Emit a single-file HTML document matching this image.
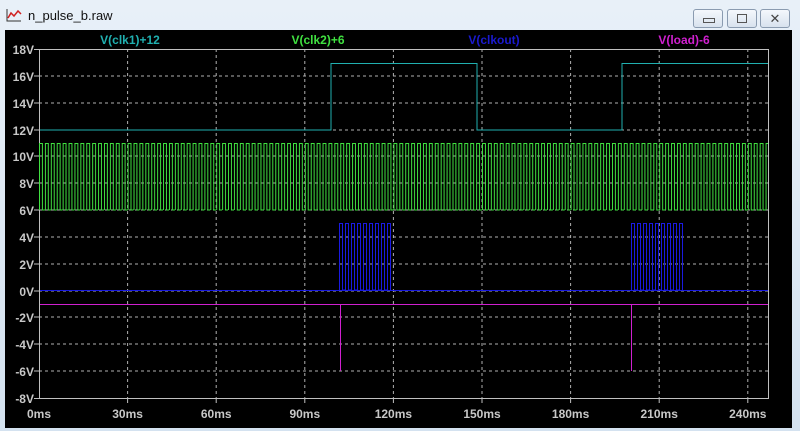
<!DOCTYPE html>
<html><head><style>
html,body{margin:0;padding:0;width:800px;height:431px;overflow:hidden;background:#dce8f4;font-family:"Liberation Sans",sans-serif}
.win{position:absolute;left:0;top:0;width:800px;height:431px;background:linear-gradient(#e8f0f8,#d4e2f0)}
.title{position:absolute;left:28px;top:8px;font-size:13px;color:#111}
.btn{position:absolute;top:9px;width:28px;height:17px;border:1px solid #8a9bb0;border-radius:3px;background:linear-gradient(#f4f8fc,#d8e2ee)}
.plot{position:absolute;left:5px;top:30px;width:787px;height:398px;background:#000}
</style></head><body><div class="win">
<svg style="position:absolute;left:6px;top:8px" width="16" height="14"><path d="M1 1V13H15" stroke="#333" fill="none"/><path d="M2 10L5 5L8 8L12 3L15 6" stroke="#d02020" stroke-width="1.5" fill="none"/></svg>
<div class="title">n_pulse_b.raw</div>
<div class="btn" style="left:693px"><div style="position:absolute;left:9px;top:8px;width:10px;height:3px;border:1px solid #555"></div></div>
<div class="btn" style="left:727px"><div style="position:absolute;left:9px;top:4px;width:8px;height:7px;border:1px solid #555"></div></div>
<div class="btn" style="left:760px;color:#444;font-size:13px;text-align:center;line-height:17px">✕</div>
<div class="plot"></div>
<svg style="position:absolute;left:0;top:0" width="800" height="431" font-family="Liberation Sans" font-weight="bold" font-size="12">
<defs>
<pattern id="g" x="39" y="0" width="5.907" height="431" patternUnits="userSpaceOnUse">
<path d="M0.5 210V143.5H3.4V210H5.907" stroke="#40e040" stroke-width="1" fill="none"/>
</pattern>
<pattern id="b" x="339" y="0" width="6" height="431" patternUnits="userSpaceOnUse">
<path d="M0.5 290V223.5H3.5V290H6" stroke="#1a1ae0" stroke-width="1" fill="none"/>
</pattern>
<pattern id="b2" x="631" y="0" width="6" height="431" patternUnits="userSpaceOnUse">
<path d="M0.5 290V223.5H3.5V290H6" stroke="#1a1ae0" stroke-width="1" fill="none"/>
</pattern>
</defs>
<g stroke="#b0b0b0" stroke-dasharray="3,3" stroke-width="1">
<path d="M127.6 49V398M216.2 49V398M304.8 49V398M393.4 49V398M482 49V398M570.6 49V398M659.2 49V398M747.8 49V398"/>
<path d="M39 76H768M39 103H768M39 130H768M39 156H768M39 183H768M39 210H768M39 237H768M39 264H768M39 291H768M39 317H768M39 344H768M39 371H768"/>
</g>
<rect x="39.5" y="49.5" width="729" height="349" fill="none" stroke="#c0c0c0"/>
<g stroke="#c0c0c0"><path d="M34 49.5H39M34 76H39M34 103H39M34 130H39M34 156H39M34 183H39M34 210H39M34 237H39M34 264H39M34 291H39M34 317H39M34 344H39M34 371H39M34 398.5H39"/>
<path d="M127.6 398V403M216.2 398V403M304.8 398V403M393.4 398V403M482 398V403M570.6 398V403M659.2 398V403M747.8 398V403"/></g>
<g fill="#c8c8c8" text-anchor="end">
<text x="34" y="54">18V</text><text x="34" y="81">16V</text><text x="34" y="108">14V</text><text x="34" y="135">12V</text><text x="34" y="161">10V</text><text x="34" y="188">8V</text><text x="34" y="215">6V</text><text x="34" y="242">4V</text><text x="34" y="269">2V</text><text x="34" y="296">0V</text><text x="34" y="322">-2V</text><text x="34" y="349">-4V</text><text x="34" y="376">-6V</text><text x="34" y="403">-8V</text>
</g>
<g fill="#c8c8c8" text-anchor="middle">
<text x="39" y="418">0ms</text><text x="127.6" y="418">30ms</text><text x="216.2" y="418">60ms</text><text x="304.8" y="418">90ms</text><text x="393.4" y="418">120ms</text><text x="482" y="418">150ms</text><text x="570.6" y="418">180ms</text><text x="659.2" y="418">210ms</text><text x="747.8" y="418">240ms</text>
</g>
<text x="130" y="44" fill="#20b0b0" text-anchor="middle">V(clk1)+12</text>
<text x="318" y="44" fill="#40e040" text-anchor="middle">V(clk2)+6</text>
<text x="494" y="44" fill="#1a1ad0" text-anchor="middle">V(clkout)</text>
<text x="684" y="44" fill="#d020d0" text-anchor="middle">V(load)-6</text>
<rect x="39" y="140" width="729" height="75" fill="url(#g)"/>
<path d="M40 130H331V63.5H477V130H622V63.5H768" stroke="#20b0b0" fill="none"/>
<path d="M40 290.5H768" stroke="#1a1ae0"/>
<rect x="339" y="220" width="52" height="72" fill="url(#b)"/>
<rect x="631" y="220" width="52" height="72" fill="url(#b2)"/>
<path d="M40 304.5H768" stroke="#d020d0" fill="none"/>
<rect x="340" y="304" width="1" height="67" fill="#d020d0"/>
<rect x="631" y="304" width="1" height="67" fill="#d020d0"/>
</svg>
</div></body></html>
